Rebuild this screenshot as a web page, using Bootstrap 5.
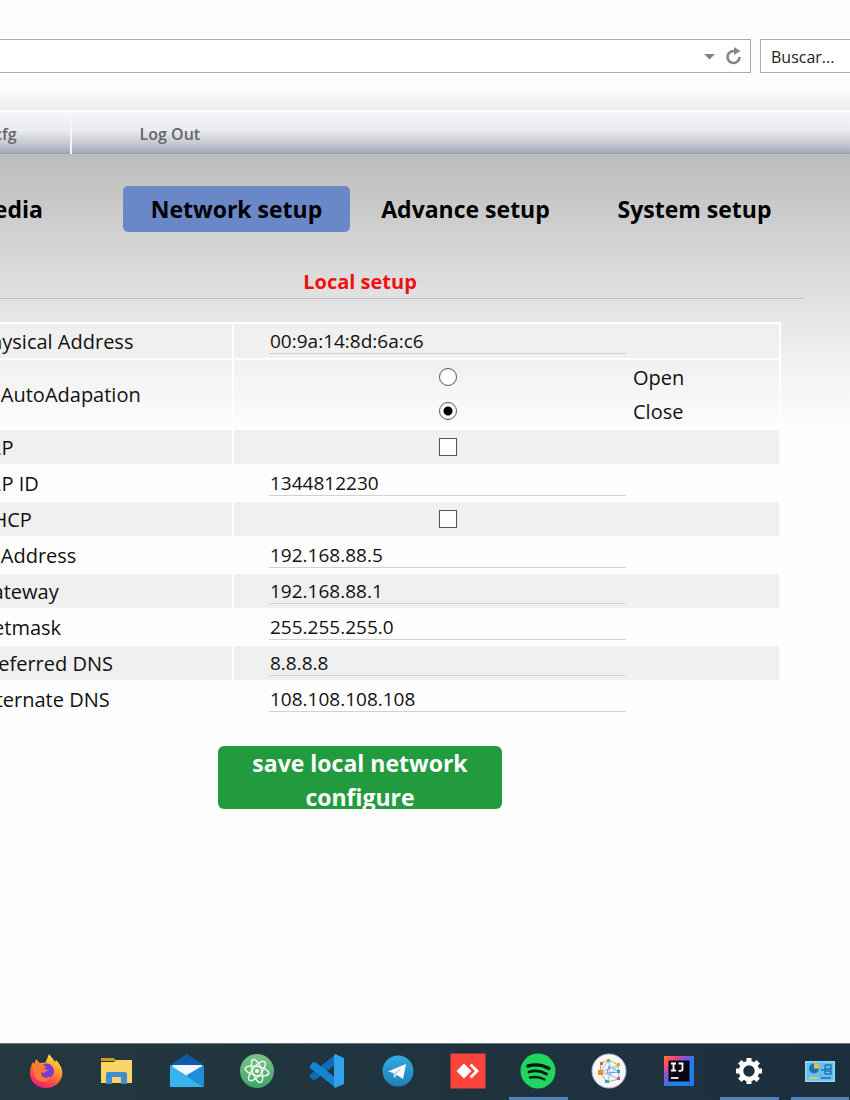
<!DOCTYPE html>
<html lang="en">
<head>
<meta charset="utf-8">
<meta name="viewport" content="width=device-width, initial-scale=1">
<title>Network setup</title>
<link href="https://cdn.jsdelivr.net/npm/bootstrap@5.3.0/dist/css/bootstrap.min.css" rel="stylesheet">
<style>
  body { font-family: "Open Sans", "Noto Sans", sans-serif; color: #111; background: #fefefe; overflow-x: hidden; }
  .browser-bar { padding: 39px 0 10px; gap: 9px; }
  .url-box, .search-box { height: 34px; border: 1px solid #acacac; background: #fff; }
  .url-box { border-left: 0; }
  .url-box input, .search-box input { border: 0; background: transparent; outline: 0; }
  .url-box button { border: 0; background: transparent; padding: 0; }
  .search-box { flex: 0 0 90px; border-right: 0; }
  .search-box input { font-size: 16px; padding: 2px 0 0 10px; color: #222; }
  .search-box input::placeholder { color: #222; opacity: 1; }
  .top-shade { height: 27px; background: linear-gradient(#fff, #ededed); }
  .menu-strip { height: 44px; border-top: 2px solid #fff;
    background: linear-gradient(#f5f6f8 0%, #e9ebf0 45%, #d6d7db 62%, #c0c3cf 80%, #abadba 95%, #9d9dab 100%); }
  .menu-strip a { font-size: 16px; line-height: 42px; font-weight: 600; color: #666; text-decoration: none; padding: 1px 53px 0 68px; }
  .menu-strip a + a { border-left: 2px solid #f4f5f8; }
  .menu-strip a:first-child { margin-left: -74px; }
  .panel-bg { background: linear-gradient(#bdbdbd 0px, #c2c2c2 25px, #d2d2d2 84px, #e4e4e4 155px, #f2f2f2 215px, #fefefe 280px); }
  .tab-row { margin-left: -106px; padding-top: 32px; gap: 2px; }
  .tab-row a { flex: 0 0 227px; height: 46px; line-height: 46px; border-radius: 5px; font-size: 23px; font-weight: 700; color: #000; text-align: center; text-decoration: none; }
  .tab-row a.active { background: #6a87c8; }
  .content-col { margin: 0 46px 0 -84px; }
  .section-title { font-size: 20px; line-height: 28px; font-weight: 700; color: #f01010; border-bottom: 1px solid #c4c4c4; margin: 36px 0 23px; padding-bottom: 2px; }
  .config-grid { width: calc(100% - 46px); margin: 0 23px; border-collapse: collapse; table-layout: fixed; }
  .config-grid th, .config-grid td { border: 2px solid #fefefe; height: 36px; padding: 1px 0 0; font-size: 20px; line-height: 28px; font-weight: 400; vertical-align: middle; }
  .config-grid th { width: 293px; padding-left: 37px; }
  .config-grid td { padding: 0 0 0 35px; }
  .config-grid tr:nth-child(odd) > * { background: #f0f0f0; }
  .config-grid tr.see-through > * { border-bottom: 0; background: transparent; }
  .config-grid input[type=text] { display: block; width: 358px; max-width: 70%; height: 26px; padding: 1px 0 0 1px; border: 0; border-bottom: 1px solid #d2d2d2; background: transparent; font-size: 19px; color: #111; outline: 0; }
  .pick { width: 70%; }
  .radio-line { height: 34px; }
  .radio-line label { padding: 2px 0 0 7px; }
  .pick input { appearance: none; display: block; width: 18px; height: 18px; margin: 0 auto; border: 1px solid #555; background: #fff; }
  .pick input[type=radio] { border-radius: 50%; }
  .pick input[type=radio]:checked { background: radial-gradient(circle, #000 4px, #fff 5px); }
  .save-btn { display: block; width: 284px; height: 63px; margin: 28px auto 0; padding: 0 20px; overflow: hidden; border: 0; border-radius: 6px; background: #219b3e; color: #fff; font-size: 23px; line-height: 34px; font-weight: 700; }
  .taskbar-wrap { overflow: hidden; }
  .taskbar { display: grid; grid-template-columns: repeat(12, 1fr); height: 57px; margin-right: -5px; padding-left: 11px; background: linear-gradient(90deg, #23383f, #1c2f3f); border-top: 1px solid #6c7c84; overflow: hidden; }
  .taskbar button { border: 0; background: transparent; padding: 0 6px; display: flex; flex-direction: column; align-items: center; justify-content: space-between; }
  .taskbar svg { width: 36px; height: 36px; margin-top: 9px; flex: none; }
  .taskbar button.running::after { content: ""; width: 100%; height: 3px; background: #5182ba; }
</style>
</head>
<body class="d-flex flex-column min-vh-100">

<header>
  <div class="browser-bar d-flex">
    <div class="url-box d-flex align-items-center flex-grow-1">
      <input type="text" class="flex-grow-1" aria-label="Address">
      <button type="button" aria-label="Show addresses" class="d-flex me-2"><svg width="14" height="14" viewBox="0 0 14 14"><path d="M2 5h11l-5.500 5.500z" fill="#858585"/></svg></button>
      <button type="button" aria-label="Reload" class="d-flex me-2"><svg width="18" height="20" viewBox="0 0 18 20"><path d="M12 5.600A6 6 0 1 0 15.500 11" fill="none" stroke="#858585" stroke-width="2.6"/><path d="M10 1v8l6.500-4z" fill="#858585"/></svg></button>
    </div>
    <div class="search-box d-flex">
      <input type="text" class="w-100" placeholder="Buscar..." aria-label="Buscar">
    </div>
  </div>
  <div class="top-shade"></div>
  <nav class="menu-strip d-flex">
    <a href="#">cfg</a>
    <a href="#">Log Out</a>
  </nav>
</header>

<main class="panel-bg flex-grow-1">
  <nav class="tab-row d-flex">
    <a href="#">Media</a>
    <a href="#" class="active" aria-current="page">Network setup</a>
    <a href="#">Advance setup</a>
    <a href="#">System setup</a>
  </nav>
  <form class="content-col">
    <h1 class="section-title text-center">Local setup</h1>
    <table class="config-grid">
      <tr><th scope="row"><label for="mac">Physical Address</label></th><td><input type="text" id="mac" value="00:9a:14:8d:6a:c6"></td></tr>
      <tr class="see-through"><th scope="row">IP AutoAdapation</th><td>
        <div class="radio-line d-flex align-items-center"><div class="pick"><input type="radio" name="auto" id="autoOpen"></div><label for="autoOpen">Open</label></div>
        <div class="radio-line d-flex align-items-center"><div class="pick"><input type="radio" name="auto" id="autoClose" checked></div><label for="autoClose">Close</label></div>
      </td></tr>
      <tr><th scope="row"><label for="p2p">P2P</label></th><td><div class="pick"><input type="checkbox" id="p2p"></div></td></tr>
      <tr><th scope="row"><label for="p2pid">P2P ID</label></th><td><input type="text" id="p2pid" value="1344812230"></td></tr>
      <tr><th scope="row"><label for="dhcp">DHCP</label></th><td><div class="pick"><input type="checkbox" id="dhcp"></div></td></tr>
      <tr><th scope="row"><label for="ip">IP Address</label></th><td><input type="text" id="ip" value="192.168.88.5"></td></tr>
      <tr><th scope="row"><label for="gw">Gateway</label></th><td><input type="text" id="gw" value="192.168.88.1"></td></tr>
      <tr><th scope="row"><label for="mask">Netmask</label></th><td><input type="text" id="mask" value="255.255.255.0"></td></tr>
      <tr><th scope="row"><label for="dns1">Preferred DNS</label></th><td><input type="text" id="dns1" value="8.8.8.8"></td></tr>
      <tr><th scope="row"><label for="dns2">Alternate DNS</label></th><td><input type="text" id="dns2" value="108.108.108.108"></td></tr>
    </table>
    <button type="button" class="save-btn">save local network configure</button>
  </form>
</main>

<footer class="taskbar-wrap">
<div class="taskbar">
  <button type="button" aria-label="Firefox"><svg viewBox="0 0 36 36">
    <defs><linearGradient id="ff" x1=".8" y1="0" x2=".3" y2="1"><stop offset="0" stop-color="#fff04a"/><stop offset=".4" stop-color="#ff9a2c"/><stop offset=".75" stop-color="#ff4450"/><stop offset="1" stop-color="#e81e7c"/></linearGradient></defs>
    <path d="M5 9l1.500 2L8 6l3.500 4 6-.5L21 1l4 5 2 3 1-2c6 6 8 13 5 19-3 6-9 9-15 9C8 35 2 28 2 20c0-4 1-8 3-11z" fill="url(#ff)"/>
    <path d="M14 12c5-4 12 0 12 6 0 5-4 8-8 8-5 0-8-4-7-7l5 1 4-3-5-1z" fill="#7a3bd0"/><path d="M4 13c4-4 9-3 12-1l2 3-4 1-1 5c1 4 6 5 10 2-2 7-12 8-16 1" fill="#ff7a2e"/></svg></button>
  <button type="button" aria-label="File Explorer"><svg viewBox="0 0 36 36"><path d="M3 5h13l2 3h-15z" fill="#d99a13"/><path d="M3 9h13l2-2h16v23H3z" fill="#fbd466"/><path d="M8 31V21q0-2 2-2h17q2 0 2 2v10h-6v-7h-9v7z" fill="#3f8ed0"/></svg></button>
  <button type="button" aria-label="Mail"><svg viewBox="0 0 36 36"><path d="M1 12L18 1l17 11v6H1z" fill="#0c5cab"/><path d="M3 12h30v12H8z" fill="#f2f6fa"/><path d="M1 12l34 22H1z" fill="#37b4ec"/><path d="M35 12v22L17 22.500z" fill="#1d8fdb"/></svg></button>
  <button type="button" aria-label="Atom"><svg viewBox="0 0 36 36"><defs><linearGradient id="at" x2="0" y2="1"><stop stop-color="#7cc58b"/><stop offset="1" stop-color="#3fa565"/></linearGradient></defs><circle cx="18" cy="18" r="17" fill="url(#at)"/><g fill="none" stroke="#eef8ef" stroke-width="1.500"><ellipse cx="18" cy="18" rx="12" ry="4.500" transform="rotate(12 18 18)"/><ellipse cx="18" cy="18" rx="12" ry="4.500" transform="rotate(72 18 18)"/><ellipse cx="18" cy="18" rx="12" ry="4.500" transform="rotate(130 18 18)"/></g><circle cx="18" cy="18" r="2" fill="#fff"/></svg></button>
  <button type="button" aria-label="Visual Studio Code"><svg viewBox="0 0 36 36"><path d="M1 24l3 3 3-.5L27 11V1L1 22z" fill="#0f6dB5"/><path d="M1 13l3-4 3 .5L27 25v10L1 15z" fill="#1683cf"/><path d="M26 1l9 4v26l-9 4-1-2V3z" fill="#2fa3ee"/></svg></button>
  <button type="button" aria-label="Telegram"><svg viewBox="0 0 36 36"><defs><linearGradient id="tg" x2="0" y2="1"><stop stop-color="#35aadf"/><stop offset="1" stop-color="#217fba"/></linearGradient></defs><circle cx="18" cy="18" r="15.500" fill="url(#tg)"/><path d="M8 18.500L26 11l-3 15-6-4-3 3-.5-5z" fill="#fff"/><path d="M14 20l9-6-6.500 7-2.500 4z" fill="#b9d8ec"/></svg></button>
  <button type="button" aria-label="AnyDesk"><svg viewBox="0 0 36 36"><path d="M.5 .5h35v35H.5z" fill="#f8443a"/><path d="M14 10.500l7.500 7.500-7.500 7.500L6.500 18zM19.500 12.500l2-2L29 18l-7.500 7.500-2-2L25 18z" fill="#fff"/></svg></button>
  <button type="button" aria-label="Spotify" class="running"><svg viewBox="0 0 36 36"><circle cx="18" cy="18" r="17.500" fill="#1fd760"/><g fill="none" stroke="#07180d" stroke-linecap="round"><path d="M8 13c7-2 15-1 21 2.500" stroke-width="3.400"/><path d="M9 19c6-2 12-1 17.500 2" stroke-width="2.800"/><path d="M10 24.500c5-1 10-.5 14.500 2" stroke-width="2.300"/></g></svg></button>
  <button type="button" aria-label="Network graph"><svg viewBox="0 0 36 36"><circle cx="18" cy="18" r="17" fill="#f8f6fa" stroke="#b9b6c2"/><g fill="none" stroke-width="1"><path d="M10 10l8-3 9 5 1 14-12 3-7-10z" stroke="#8ac05a"/><path d="M9 19l9-12 1 15-9-3 17-7M19 22l9 4M27 12l-8 10-3 7" stroke="#b3a9de"/><path d="M18 13l10 6-12 1z" stroke="#35b7d4"/></g><path d="M7 17h5v5H7z" fill="#ff8a1c"/><path d="M9 9h3v3H9z" fill="#e9504d"/><path d="M26 17h3v3h-3zM14 27h4v3h-4z" fill="#26a9c6"/><path d="M16 6h3v3h-3z" fill="#6dbb4a"/><path d="M26 24h3v3h-3z" fill="#c65ac2"/><path d="M26 10h3v3h-3z" fill="#f0a030"/></svg></button>
  <button type="button" aria-label="IntelliJ IDEA"><svg viewBox="0 0 36 36"><defs><linearGradient id="ij" x2="1" y2="1"><stop stop-color="#ff7a2a"/><stop offset=".22" stop-color="#f0457e"/><stop offset=".4" stop-color="#6f5be0"/><stop offset=".65" stop-color="#1686f0"/><stop offset="1" stop-color="#2a72e8"/></linearGradient></defs><path d="M3 3h30v30H3z" fill="url(#ij)"/><path d="M7.500 7.500h21v21h-21z" fill="#0b0612"/><path d="M10 10.500h5M12.500 10.500v7M10 17.500h5M17.500 10.500h4v5.500q0 1.800-2 1.800h-2" fill="none" stroke="#fff" stroke-width="1.800"/><path d="M10 24h7.500v2H10z" fill="#ddd"/></svg></button>
  <button type="button" aria-label="Settings" class="running"><svg viewBox="0 0 36 36"><circle cx="18" cy="18" r="8" fill="none" stroke="#fff" stroke-width="4.500"/><g stroke="#fff" stroke-width="5"><path d="M18 5v4M18 27v4M5 18h4M27 18h4M8.800 8.800l3 3M24.200 24.200l3 3M8.800 27.200l3-3M24.200 11.800l3-3"/></g></svg></button>
  <button type="button" aria-label="Control Panel" class="running"><svg viewBox="0 0 36 36"><path d="M3 8h30v21H3z" fill="#8edcf8"/><path d="M4.500 9.500h27v18h-27z" fill="#68c1ec"/><circle cx="12" cy="15.500" r="5" fill="#1976bd"/><path d="M12 10v5.500h5.500A5.500 5.500 0 0 0 12 10z" fill="#ffb934"/><path d="M19 17h4M23 12v9M23 12h6v4h-6M23 21h6v-3h-6" fill="none" stroke="#2277b9" stroke-width="1.500"/><path d="M7 24h9v2H7z" fill="#e6c863"/><path d="M19 24h10v2H19z" fill="#2a85c6"/></svg></button>
</div>
</footer>
<script src="https://cdn.jsdelivr.net/npm/bootstrap@5.3.0/dist/js/bootstrap.bundle.min.js"></script>
</body>
</html>
